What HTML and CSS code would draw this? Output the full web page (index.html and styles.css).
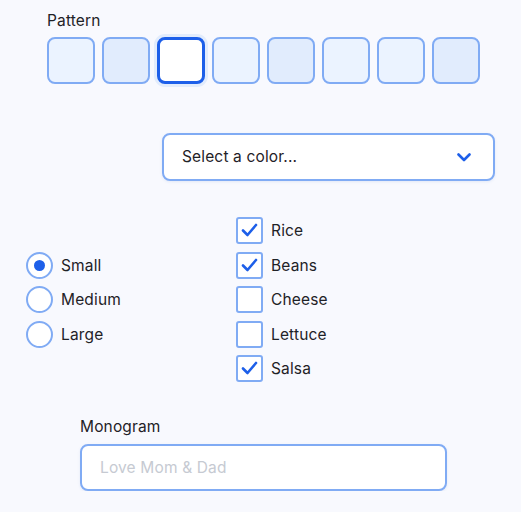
FILE: index.html
```html
<!DOCTYPE html>
<html lang="en">
<head>
<meta charset="utf-8">
<title>Customize</title>
<link rel="stylesheet" href="styles.css">
</head>
<body>
<main class="form">
  <section class="pattern">
    <div class="label">Pattern</div>
    <div class="swatches">
      <div class="swatch light"></div>
      <div class="swatch dark"></div>
      <div class="swatch selected"></div>
      <div class="swatch light"></div>
      <div class="swatch dark"></div>
      <div class="swatch light"></div>
      <div class="swatch light"></div>
      <div class="swatch dark"></div>
    </div>
  </section>

  <div class="select">
    <span>Select a color...</span>
    <svg class="chev" width="14" height="9" viewBox="0 0 14 9"><polyline points="1.5,1.5 7,7 12.5,1.5" fill="none" stroke="#1d5fe9" stroke-width="2.6" stroke-linecap="round" stroke-linejoin="round"/></svg>
  </div>

  <section class="choices">
    <div class="radios">
      <div class="row"><span class="radio on"></span><span class="text">Small</span></div>
      <div class="row"><span class="radio"></span><span class="text">Medium</span></div>
      <div class="row"><span class="radio"></span><span class="text">Large</span></div>
    </div>
    <div class="checks">
      <div class="row"><span class="box"><svg width="23" height="23" viewBox="0 0 23 23"><polyline points="5,11.5 9.5,16 18,6" fill="none" stroke="#1d5fe9" stroke-width="2.6" stroke-linecap="round" stroke-linejoin="round"/></svg></span><span class="text">Rice</span></div>
      <div class="row"><span class="box"><svg width="23" height="23" viewBox="0 0 23 23"><polyline points="5,11.5 9.5,16 18,6" fill="none" stroke="#1d5fe9" stroke-width="2.6" stroke-linecap="round" stroke-linejoin="round"/></svg></span><span class="text">Beans</span></div>
      <div class="row"><span class="box"></span><span class="text">Cheese</span></div>
      <div class="row"><span class="box"></span><span class="text">Lettuce</span></div>
      <div class="row"><span class="box"><svg width="23" height="23" viewBox="0 0 23 23"><polyline points="5,11.5 9.5,16 18,6" fill="none" stroke="#1d5fe9" stroke-width="2.6" stroke-linecap="round" stroke-linejoin="round"/></svg></span><span class="text">Salsa</span></div>
    </div>
  </section>

  <section class="monogram">
    <div class="label">Monogram</div>
    <div class="input"><span class="placeholder">Love Mom &amp; Dad</span></div>
  </section>
</main>
</body>
</html>
```

FILE: styles.css
```css
html, body {
  margin: 0;
  padding: 0;
  background: #f8f9fe;
}
body {
  font-family: Inter, "Noto Sans", sans-serif;
  font-size: 15.5px;
  letter-spacing: 0.15px;
  line-height: 20px;
  color: #1f2227;
}
.form {
  display: flex;
  flex-direction: column;
  align-items: flex-start;
}
.pattern {
  margin: 11px 0 0 47px;
}
.label {
  height: 20px;
}
.swatches {
  display: flex;
  gap: 7px;
  margin-top: 6px;
}
.swatch {
  width: 48px;
  height: 47px;
  box-sizing: border-box;
  border: 2px solid #80abf4;
  border-radius: 8px;
}
.swatch.light { background: #ebf3ff; }
.swatch.dark { background: #e1ecfd; }
.swatch.selected {
  background: #fff;
  border: 3px solid #1d5fe9;
  box-shadow: 0 0 0 3px #e2ecfc;
}
.select {
  margin: 49px 0 0 162px;
  width: 333px;
  height: 48px;
  box-sizing: border-box;
  border: 2px solid #80abf4;
  border-radius: 8px;
  background: #fff;
  display: flex;
  align-items: center;
  justify-content: space-between;
  padding: 0 22px 0 18px;
  box-shadow: 0 1px 3px rgba(80, 120, 200, 0.12);
}
.chev { display: block; }
.choices {
  margin: 36px 0 0 26px;
  display: flex;
  align-items: center;
  gap: 0;
}
.radios, .checks {
  display: flex;
  flex-direction: column;
  gap: 7.5px;
}
.radios { width: 210px; }
.row {
  display: flex;
  align-items: center;
  gap: 7px;
  height: 27px;
}
.radio {
  width: 27px;
  height: 27px;
  box-sizing: border-box;
  border: 2px solid #80abf4;
  border-radius: 50%;
  background: #fff;
  display: flex;
  align-items: center;
  justify-content: center;
}
.radio.on::after {
  content: "";
  width: 11px;
  height: 11px;
  border-radius: 50%;
  background: #1d5fe9;
}
.box {
  width: 27px;
  height: 27px;
  box-sizing: border-box;
  border: 2px solid #80abf4;
  border-radius: 3px;
  background: #fff;
  display: flex;
  align-items: center;
  justify-content: center;
}
.box svg { display: block; }
.text { margin-left: 1px; padding-top: 1px; }
.monogram {
  margin: 35px 0 0 80px;
}
.monogram .input {
  margin-top: 7px;
  width: 367px;
  height: 47px;
  box-sizing: border-box;
  border: 2px solid #80abf4;
  border-radius: 8px;
  background: #fff;
  display: flex;
  align-items: center;
  padding-left: 18px;
  box-shadow: 0 1px 3px rgba(80, 120, 200, 0.12);
}
.placeholder { color: #c6cad2; }
```
